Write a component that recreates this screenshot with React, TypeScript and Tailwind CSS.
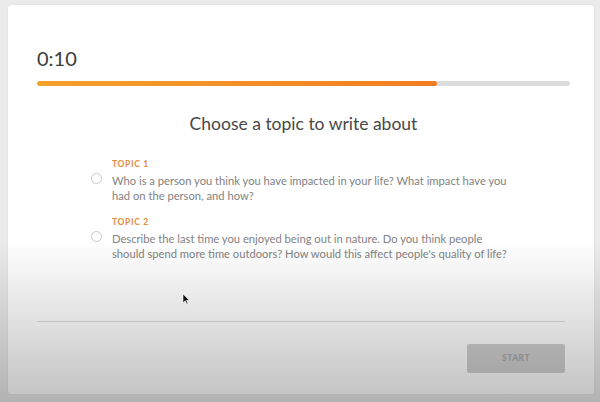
import React from "react";

const topics = [
  {
    label: "TOPIC 1",
    text: "Who is a person you think you have impacted in your life? What impact have you had on the person, and how?",
  },
  {
    label: "TOPIC 2",
    text: "Describe the last time you enjoyed being out in nature. Do you think people should spend more time outdoors? How would this affect people's quality of life?",
  },
];

export default function App() {
  return (
    <div
      className="relative w-[600px] h-[402px] overflow-hidden bg-[#ebebeb] pl-[8px] pr-[6px] pt-[5px] pb-[8px]"
      style={{ fontFamily: "Lato, 'Open Sans', sans-serif" }}
    >
      <div className="h-full bg-white rounded-[3px] shadow-[0_0_2px_rgba(0,0,0,0.08)] pl-[29px] pr-[24px] flex flex-col">
        <div className="pt-[41px] text-[20px] leading-[24px] text-[#3d3d3d]">0:10</div>
        <div className="mt-[11px] h-[5px] w-[533px] rounded-full bg-[#dcdcdc] overflow-hidden">
          <div className="h-full w-[75%] rounded-full bg-gradient-to-r from-[#f4a12a] to-[#f27d22]" />
        </div>
        <div className="mt-[27px] w-[533px] text-center text-[17.5px] leading-[22px] text-[#484848]">
          Choose a topic to write about
        </div>
        <div className="mt-[23px] flex flex-col gap-[13px] pl-[75px] w-[490px]">
          {topics.map((t) => (
            <div key={t.label} className="relative">
              <div className="text-[8.5px] leading-[12px] font-bold tracking-[0.08em] text-[#e98a3c]">
                {t.label}
              </div>
              <div className="absolute left-[-21px] top-[15px] w-[11px] h-[11px] rounded-full border border-[#c9c9c9] bg-white" />
              <div className="mt-[3px] text-[11.2px] leading-[15px] text-[#828282] w-[400px]">
                {t.text}
              </div>
            </div>
          ))}
        </div>
        <div className="flex-1" />
        <div className="h-px w-[528px] bg-[#dddddd]" />
        <div className="flex justify-end w-[528px] mt-[22px] mb-[21px]">
          <div className="w-[98px] h-[29px] rounded-[2px] bg-[#d0d0d0] flex items-center justify-center text-[8.5px] font-bold tracking-[0.06em] text-[#a6a6a6]">
            START
          </div>
        </div>
      </div>
      <div className="pointer-events-none absolute inset-0 bg-[linear-gradient(to_bottom,rgba(0,0,0,0)_0px,rgba(0,0,0,0)_240px,rgba(0,0,0,0.24)_402px)]" />
      <svg className="absolute left-[182px] top-[293px]" width="8" height="12" viewBox="0 0 8 12">
        <path d="M1 1 L1 10 L3.2 7.8 L4.8 11 L6 10.4 L4.5 7.3 L7.3 7.3 Z" fill="#111" stroke="#fff" strokeWidth="0.6" />
      </svg>
    </div>
  );
}
